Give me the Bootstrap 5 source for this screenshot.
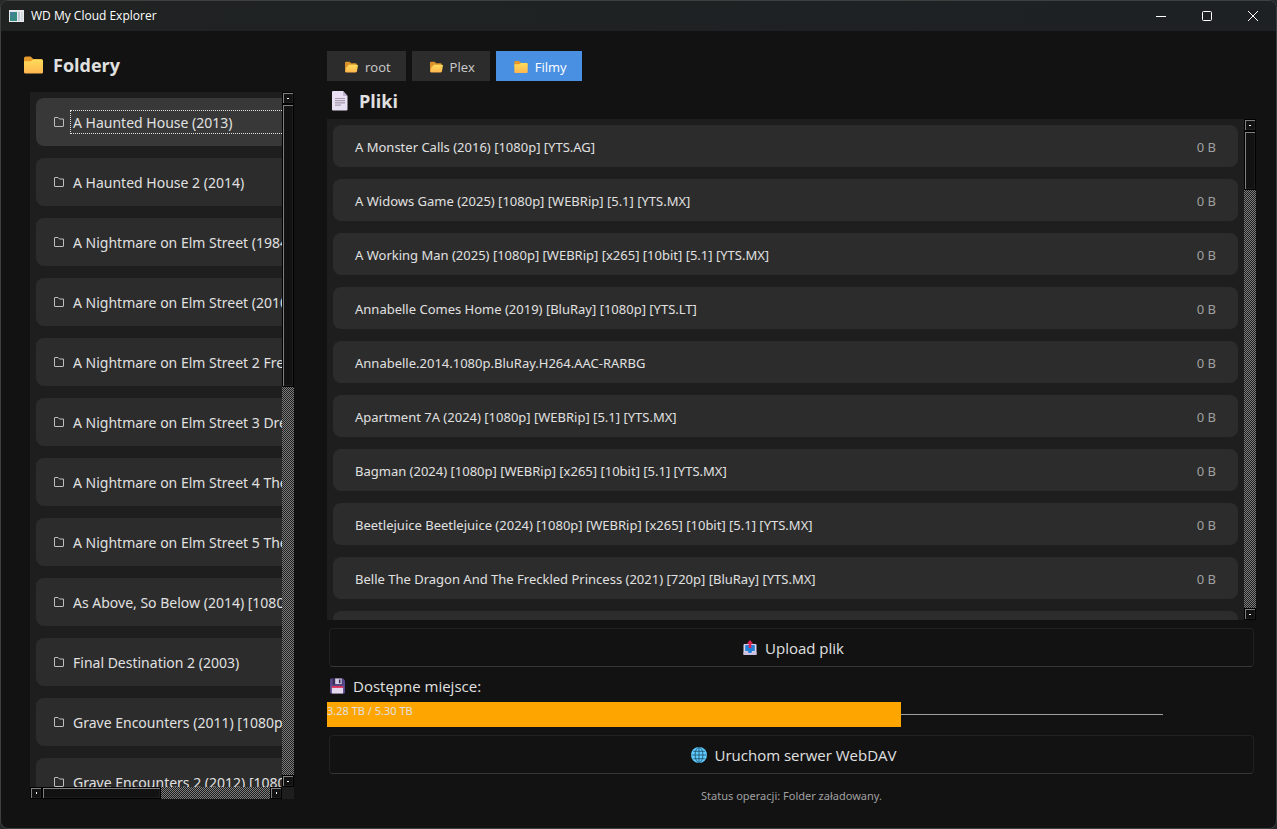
<!DOCTYPE html>
<html lang="pl" data-bs-theme="dark">
<head>
<meta charset="utf-8">
<meta name="viewport" content="width=device-width, initial-scale=1">
<title>WD My Cloud Explorer</title>
<link href="https://cdn.jsdelivr.net/npm/bootstrap@5.3.0/dist/css/bootstrap.min.css" rel="stylesheet">
<style>
  body { background: #26292a; font-family: "Open Sans", "Noto Sans", sans-serif; font-size: 15px; line-height: 20px; color: #e0e0e0; }
  button { color: inherit; }
  .app-window { background: #121212; border: 1px solid #3e3f3f; border-radius: 8px; min-height: 600px; }
  .titlebar { height: 30px; background: linear-gradient(90deg, #202322, #1d2124); font-size: 12px; color: #fff; }
  .titlebar span { margin-left: 7px; }
  .win-btn { width: 46px; height: 30px; }
  .pane-title { gap: 10px; font-size: 18px; line-height: 26px; font-weight: 700; color: #e0e0e0; }
  .sidebar { width: 326px; padding: 21px 33px 29px 23px; }
  .sidebar .pane-title { height: 40px; }
  .main-pane { padding: 20px 20px 22px 0; min-width: 0; }
  .scroll-area { background: #1e1e1e; min-height: 0; font-family: "Noto Sans", "Open Sans", sans-serif; }
  .folder-area { margin-left: 6px; }
  .view { min-width: 0; min-height: 0; }
  .folder-item { width: 330px; height: 48px; margin: 6px 6px 12px; padding-left: 17px; border-radius: 8px; background: #2c2c2c; font-size: 14px; }
  .folder-item.active { background: #383838; }
  .folder-name { margin-left: 5px; padding: 2px 2px 0; border: 1px solid transparent; text-align: left; line-height: 20px; }
  .active .folder-name { border: 1px dotted #e0e0e0; }
  .file-item { height: 42px; margin: 6px 6px 12px; padding: 2px 22px 0; border-radius: 8px; background: #2c2c2c; font-size: 13px; }
  .file-size { color: #a0a0a0; }
  .crumbs { gap: 6px; }
  .crumb { height: 30px; gap: 7px; padding: 2px 15px 0 18px; background: #2c2c2c; color: #ccc; font-size: 13px; }
  .crumb.active { background: #4a90e2; color: #fff; }
  .files-title { height: 38px; gap: 11px; padding: 2px 5px 0; }
  .action-btn { height: 39px; margin: 0 2px; padding-left: 10px; border: 1px solid #212121; border-bottom-color: #363636; border-radius: 4px; background: #121212; }
  .space-label { height: 35px; padding: 2px 3px 0; }
  .space-track { height: 25px; background: linear-gradient(#a0a0a0, #a0a0a0) 0 12px / 90% 1px no-repeat; }
  .space-fill { height: 25px; background: #ffa500; font-family: "Noto Sans", sans-serif; font-size: 11px; line-height: 18px; color: #e0e0e0; }
  .status-line { margin-top: 12px; font-family: "Noto Sans", sans-serif; font-size: 11px; color: #a0a0a0; }

  /* classic scroll bars */
  .sbar { flex: 0 0 12px; background: repeating-conic-gradient(#7c7c7c 0 25%, #1e1e1e 0 50%) 0 0 / 2px 2px; }
  .sbar-btn { width: 12px; height: 12px; flex: none; }
  .sbar-btn, .sbar-thumb { background: #121212; border: 1px solid #000; box-shadow: inset 1px 1px #808080, inset -1px -1px #1e1e1e; }
  .sbar-btn::after { content: ""; width: 2px; height: 1px; background: #fff; }
  .sbar-h .sbar-btn::after { width: 1px; height: 2px; }
  .sbar-corner { width: 12px; height: 12px; flex: none; }
</style>
</head>
<body>
<svg class="position-absolute" width="0" height="0" aria-hidden="true">
  <defs>
    <linearGradient id="gold" x1="0" y1="0" x2="0" y2="1"><stop offset="0" stop-color="#ffdc5a"/><stop offset="1" stop-color="#ffb64f"/></linearGradient>
  </defs>
  <symbol id="i-folder" viewBox="0 0 20 18"><path d="M0 2Q0 0 2 0H7L10 3H18Q20 3 20 5V8H0Z" fill="#e59a2b"/><path d="M0 5H7L10 3H18.500Q20 3 20 5V16.500Q20 18 18.500 18H1.500Q0 18 0 16.500Z" fill="url(#gold)"/></symbol>
  <symbol id="i-open" viewBox="0 0 14 12"><path d="M0 1.500Q0 .3 1.200 .3H5L6.600 2H11.500Q12.500 2 12.500 3.200V6L1 11.500Q0 11 0 10Z" fill="#dc922c"/><path d="M4 3.600H13Q14.100 3.600 13.900 4.700L12.900 10.700Q12.700 11.800 11.500 11.800H1Q.2 11.600 .4 10.600L1.600 6.200Q1.800 5.400 2.700 5.400Z" fill="url(#gold)"/></symbol>
  <symbol id="i-line" viewBox="0 0 12 12"><path d="M1.500 10V2Q1.500 1.500 2 1.500H5L6.500 3H10.500V10Q10.500 10.500 10 10.500H2Q1.500 10.500 1.500 10Z" fill="none" stroke="#bdbdbd"/></symbol>
  <symbol id="i-page" viewBox="0 0 16 20"><path d="M0 1Q0 0 1 0H11L15.500 5V18.500Q15.500 19.500 14.500 19.500H1Q0 19.500 0 18.500Z" fill="#e9dff3"/><path d="M11 0V4Q11 5 12 5H15.500Z" fill="#bfb2cc"/><path d="M3 7.500H13M3 9.700H13M3 11.900H13M3 14.100H9" stroke="#a69cad" stroke-width="1.200"/></symbol>
  <symbol id="i-up" viewBox="0 0 14 15"><path d="M.5 5Q.5 4 1.500 4H12.500Q13.500 4 13.500 5V14.500H.5Z" fill="#d9cfe8"/><path d="M2.200 5H11.800V11H9L8.500 13H5.500L5 11H2.200Z" fill="#237fd3"/><path d="M.5 12H4.500L5 13.500H9L9.500 12H13.500V15H.5Z" fill="#cbbfdf"/><path d="M7 0L10.300 3.700H8.300V8H5.700V3.700H3.700Z" fill="#dc2454"/></symbol>
  <symbol id="i-disk" viewBox="0 0 16 16"><path d="M1 0H14L16 2V15Q16 16 15 16H1Q0 16 0 15V1Q0 0 1 0Z" fill="#574789"/><path d="M3 0H13V6.500H3Z" fill="#342c52"/><path d="M5.500 0H12.500V6H5.500Z" fill="#d8cde6"/><path d="M9.500 1H11.200V5H9.500Z" fill="#342c52"/><path d="M2 8H14V16H2Z" fill="#e4d9ef"/><path d="M2 8H14V10H2Z" fill="#d9315a"/></symbol>
  <symbol id="i-globe" viewBox="0 0 16 16"><circle cx="8" cy="8" r="8" fill="#5ecbff"/><g fill="none" stroke="#173e58" stroke-width=".7"><path d="M8 .5V15.500M.5 8H15.500M2.200 4.300H13.800M2.200 11.700H13.800"/><ellipse cx="8" cy="8" rx="3.900" ry="7.500"/></g></symbol>
</svg>

<div class="app-window vh-100 d-flex flex-column overflow-hidden">
  <header class="titlebar d-flex align-items-center flex-shrink-0">
    <svg class="ms-2" width="15" height="12" viewBox="0 0 15 12"><path d="M0 0H15V12H0Z" fill="#e8ecef"/><path d="M1 2H8V11H1Z" fill="#378b83"/><path d="M1 2H4V8Z" fill="#4a78a8"/><path d="M9 2H11V11H9Z" fill="#bfc9cf"/><path d="M12 2H14V11H12Z" fill="#d5dbdf"/></svg>
    <span class="me-auto">WD My Cloud Explorer</span>
    <button class="win-btn btn p-0 border-0 rounded-0 lh-1" aria-label="Minimalizuj"><svg class="d-block mx-auto" width="10" height="10"><path d="M0 5.500H10" stroke="#fff"/></svg></button>
    <button class="win-btn btn p-0 border-0 rounded-0 lh-1" aria-label="Maksymalizuj"><svg class="d-block mx-auto" width="10" height="10"><rect x=".5" y=".5" width="9" height="9" rx="1" fill="none" stroke="#fff"/></svg></button>
    <button class="win-btn btn p-0 border-0 rounded-0 lh-1" aria-label="Zamknij"><svg class="d-block mx-auto" width="10" height="10"><path d="M0 0L10 10M10 0L0 10" stroke="#fff"/></svg></button>
  </header>

  <div class="d-flex flex-grow-1 view">
    <aside class="sidebar d-flex flex-column flex-shrink-0">
      <h1 class="pane-title d-flex align-items-start m-0 flex-shrink-0"><svg class="mt-1" width="19" height="18"><use href="#i-folder"/></svg>Foldery</h1>
      <div class="scroll-area folder-area d-flex flex-column flex-grow-1">
        <div class="d-flex flex-grow-1 view">
          <ul class="view list-unstyled m-0 flex-grow-1 overflow-hidden" id="folders"></ul>
          <div class="sbar d-flex flex-column">
            <button class="sbar-btn p-0 d-flex align-items-center justify-content-center" aria-label="W górę"></button>
            <div class="flex-grow-1"><div class="sbar-thumb" style="height:42.2%"></div></div>
            <button class="sbar-btn p-0 d-flex align-items-center justify-content-center" aria-label="W dół"></button>
          </div>
        </div>
        <div class="d-flex flex-shrink-0">
          <div class="sbar sbar-h d-flex flex-grow-1">
            <button class="sbar-btn p-0 d-flex align-items-center justify-content-center" aria-label="W lewo"></button>
            <div class="d-flex flex-grow-1"><div class="sbar-thumb" style="width:52.2%"></div></div>
            <button class="sbar-btn p-0 d-flex align-items-center justify-content-center" aria-label="W prawo"></button>
          </div>
          <div class="sbar-corner"></div>
        </div>
      </div>
    </aside>

    <main class="main-pane d-flex flex-column flex-grow-1">
      <nav class="crumbs d-flex flex-shrink-0" aria-label="Ścieżka">
        <button class="crumb border-0 d-flex align-items-center"><svg width="13" height="12"><use href="#i-open"/></svg>root</button>
        <button class="crumb border-0 d-flex align-items-center"><svg width="13" height="12"><use href="#i-open"/></svg>Plex</button>
        <button class="crumb active border-0 d-flex align-items-center"><svg width="14" height="12"><use href="#i-folder"/></svg>Filmy</button>
      </nav>
      <h2 class="pane-title files-title d-flex align-items-center m-0 flex-shrink-0"><svg width="16" height="20"><use href="#i-page"/></svg>Pliki</h2>
      <div class="scroll-area d-flex flex-grow-1">
        <ul class="view list-unstyled m-0 flex-grow-1 overflow-hidden" id="files"></ul>
        <div class="sbar d-flex flex-column">
          <button class="sbar-btn p-0 d-flex align-items-center justify-content-center" aria-label="W górę"></button>
          <div class="flex-grow-1"><div class="sbar-thumb" style="height:12.4%"></div></div>
          <button class="sbar-btn p-0 d-flex align-items-center justify-content-center" aria-label="W dół"></button>
        </div>
      </div>
      <button class="action-btn mt-2 d-flex align-items-center justify-content-center gap-2 flex-shrink-0"><svg width="14" height="15"><use href="#i-up"/></svg>Upload plik</button>
      <div class="space-label d-flex align-items-center gap-2 flex-shrink-0"><svg width="15" height="16"><use href="#i-disk"/></svg><span id="space">Dostępne miejsce:</span></div>
      <div class="space-track flex-shrink-0" role="progressbar" aria-labelledby="space" aria-valuenow="62" aria-valuemin="0" aria-valuemax="100">
        <div class="space-fill text-nowrap" style="width:61.8%">3.28 TB / 5.30 TB</div>
      </div>
      <button class="action-btn mt-2 d-flex align-items-center justify-content-center gap-2 flex-shrink-0"><svg width="16" height="16"><use href="#i-globe"/></svg>Uruchom serwer WebDAV</button>
      <div class="status-line text-center flex-shrink-0">Status operacji: Folder załadowany.</div>
    </main>
  </div>
</div>

<script src="https://cdn.jsdelivr.net/npm/bootstrap@5.3.0/dist/js/bootstrap.bundle.min.js"></script>
<script>
  const folders = [
    "A Haunted House (2013)", "A Haunted House 2 (2014)", "A Nightmare on Elm Street (1984)",
    "A Nightmare on Elm Street (2010)", "A Nightmare on Elm Street 2 Freddy",
    "A Nightmare on Elm Street 3 Dream", "A Nightmare on Elm Street 4 The",
    "A Nightmare on Elm Street 5 The", "As Above, So Below (2014) [1080p]",
    "Final Destination 2 (2003)", "Grave Encounters (2011) [1080p]", "Grave Encounters 2 (2012) [1080p]"
  ];
  const files = [
    "A Monster Calls (2016) [1080p] [YTS.AG]",
    "A Widows Game (2025) [1080p] [WEBRip] [5.1] [YTS.MX]",
    "A Working Man (2025) [1080p] [WEBRip] [x265] [10bit] [5.1] [YTS.MX]",
    "Annabelle Comes Home (2019) [BluRay] [1080p] [YTS.LT]",
    "Annabelle.2014.1080p.BluRay.H264.AAC-RARBG",
    "Apartment 7A (2024) [1080p] [WEBRip] [5.1] [YTS.MX]",
    "Bagman (2024) [1080p] [WEBRip] [x265] [10bit] [5.1] [YTS.MX]",
    "Beetlejuice Beetlejuice (2024) [1080p] [WEBRip] [x265] [10bit] [5.1] [YTS.MX]",
    "Belle The Dragon And The Freckled Princess (2021) [720p] [BluRay] [YTS.MX]"
  ];
  document.getElementById("folders").innerHTML = folders.map((name, i) =>
    `<li><button class="folder-item border-0 d-flex align-items-center py-0 pe-0 text-nowrap${i ? "" : " active"}">
      <svg class="flex-shrink-0" width="12" height="12"><use href="#i-line"/></svg>
      <span class="folder-name flex-grow-1">${name}</span></button></li>`).join("");
  document.getElementById("files").innerHTML = files.map(name =>
    `<li class="file-item d-flex align-items-center justify-content-between text-nowrap">
      <span>${name}</span><span class="file-size">0 B</span></li>`).join("") + `<li class="file-item"></li>`;
</script>
</body>
</html>
